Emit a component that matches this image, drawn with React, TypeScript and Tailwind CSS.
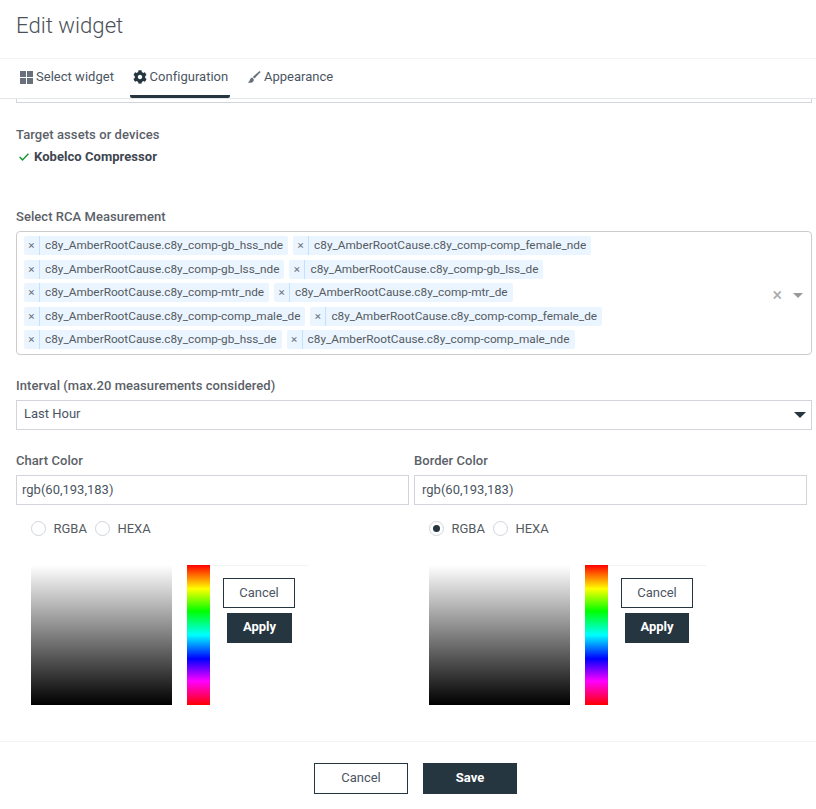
import React from "react";
import { FaCog } from "react-icons/fa";

const rows = [
  ["c8y_AmberRootCause.c8y_comp-gb_hss_nde", "c8y_AmberRootCause.c8y_comp-comp_female_nde"],
  ["c8y_AmberRootCause.c8y_comp-gb_lss_nde", "c8y_AmberRootCause.c8y_comp-gb_lss_de"],
  ["c8y_AmberRootCause.c8y_comp-mtr_nde", "c8y_AmberRootCause.c8y_comp-mtr_de"],
  ["c8y_AmberRootCause.c8y_comp-comp_male_de", "c8y_AmberRootCause.c8y_comp-comp_female_de"],
  ["c8y_AmberRootCause.c8y_comp-gb_hss_de", "c8y_AmberRootCause.c8y_comp-comp_male_nde"],
];

function Chip({ text }: { text: string }) {
  return (
    <div className="flex h-[19px] mr-[5px] rounded-[2px] bg-[#ebf5ff] text-[11.8px] leading-[18px] text-[#555b62]">
      <span className="w-[16px] text-center border-r border-[#c2e0ff] text-[#6b7280]">×</span>
      <span className="pl-[5px] pr-[5px]">{text}</span>
    </div>
  );
}

function Radio({ label, checked }: { label: string; checked?: boolean }) {
  return (
    <div className="flex items-center">
      <span className="flex items-center justify-center w-[15px] h-[15px] rounded-full border border-[#d1d5db] bg-white">
        {checked && <span className="w-[7px] h-[7px] rounded-full bg-[#263640]" />}
      </span>
      <span className="ml-[7.5px] text-[13px] text-[#555b62]">{label}</span>
    </div>
  );
}

function ColorPicker({ applyWidth, checked }: { applyWidth: string; checked?: boolean }) {
  return (
    <div className="pl-[15px]">
      <div className="flex gap-[8px] h-[15px] items-center mt-[16px]">
        <Radio label="RGBA" checked={checked} />
        <Radio label="HEXA" />
      </div>
      <div className="flex mt-[29px]">
        <div className="w-[141px] h-[140px] bg-[linear-gradient(to_bottom,#ffffff,#000000)]" />
        <div className="w-[23px] h-[140px] ml-[15px] bg-[linear-gradient(to_bottom,#ff0000_0%,#ffff00_17%,#00ff00_33%,#00ffff_50%,#0000ff_67%,#ff00ff_83%,#ff0000_100%)]" />
        <div className="w-[98px] border-t border-[#f2f3f4] flex flex-col pl-[13px] pt-[12px]">
          <div className="w-[72px] h-[30px] border border-[#263640] flex items-center justify-center text-[13px] text-[#4b5563]">
            Cancel
          </div>
          <div className={`${applyWidth} h-[30px] mt-[5px] ml-[4px] pb-[2px] bg-[#263640] flex items-center justify-center text-[13px] font-bold text-white`}>
            Apply
          </div>
        </div>
      </div>
    </div>
  );
}

export default function App() {
  return (
    <div className="w-[816px] h-[809px] overflow-hidden bg-white font-[Roboto,sans-serif] text-[#3e4650]">
      <div className="h-[59px] border-b border-[#f2f3f4] pl-[16px] pt-[10px] text-[22.2px] leading-[30px] font-light text-[#4b5158]">
        Edit widget
      </div>
      <div className="h-[40px] border-b border-[#e5e7eb] flex pl-[11px] text-[13px] text-[#4b5563] tracking-[0.02px]">
        <div className="h-[39px] px-[8px] flex items-center border-b-[3px] border-transparent">
          <svg width="13" height="13" viewBox="0 0 13 13" fill="#68717b" className="ml-[1px] mr-[3px]">
            <rect x="0" y="0" width="6" height="6" />
            <rect x="7" y="0" width="6" height="6" />
            <rect x="0" y="7" width="6" height="6" />
            <rect x="7" y="7" width="6" height="6" />
          </svg>
          Select widget
        </div>
        <div className="h-[39px] w-[100px] ml-[8px] pl-[1px] flex items-center justify-center border-b-[3px] border-[#263640] rounded-b-[2px]">
          <FaCog size={14} className="mr-[3px] text-[#263640]" />
          Configuration
        </div>
        <div className="h-[39px] pl-[18px] flex items-center border-b-[3px] border-transparent">
          <svg width="14" height="14" viewBox="0 0 14 14" fill="#68717b" className="mr-[3px] -ml-[1px]">
            <path d="M12.6 1 L5.8 6.9 L7.5 8.6 L13.6 1.9 Z" />
            <path d="M5.2 7.6 C3.4 7.8 3.2 9.6 2.4 10.9 C2 11.5 1.4 11.9 0.8 12.2 C2.6 13.2 5.2 13 6.2 11.6 C6.9 10.6 6.9 9.5 6.6 9 Z" />
          </svg>
          Appearance
        </div>
      </div>
      <div className="pl-[16px] pr-[4px]">
        <div className="h-[4px] border-b border-x border-[#d1d5db]" />
        <div className="mt-[24px] h-[16px] text-[13px] leading-[16px] font-medium tracking-[0.08px] text-[#5b6168]">Target assets or devices</div>
        <div className="mt-[6px] h-[16px] flex items-center text-[13px] font-bold tracking-[0.05px] text-[#3e4650]">
          <svg width="10" height="8" viewBox="0 0 10 8" fill="none" stroke="#1a9638" strokeWidth="1.5" className="ml-[3px] mr-[5px]">
            <path d="M0.6 4 L3.5 6.9 L9.4 0.8" />
          </svg>
          Kobelco Compressor
        </div>
        <div className="mt-[44px] h-[16px] text-[13px] leading-[16px] font-medium tracking-[0.05px] text-[#5b6168]">Select RCA Measurement</div>
        <div className="mt-[6px] h-[124px] border border-[#ccc] rounded-[4px] pl-[7px] pt-[4px] flex items-start">
          <div className="flex-1 flex flex-col gap-[4.5px]">
            {rows.map((r) => (
              <div key={r[0]} className="flex">
                <Chip text={r[0]} />
                <Chip text={r[1]} />
              </div>
            ))}
          </div>
          <div className="self-center flex items-center text-[#aaa] mr-[8px]">
            <span className="text-[18px] leading-[18px] mr-[9px]">×</span>
            <span className="w-0 h-0 border-x-[5px] border-x-transparent border-t-[5px] border-t-[#999] ml-[2px]" />
          </div>
        </div>
        <div className="mt-[23px] h-[16px] text-[13px] leading-[16px] font-medium tracking-[0.05px] text-[#5b6168]">Interval (max.20 measurements considered)</div>
        <div className="mt-[6px] h-[30px] border border-[#d1d5db] flex items-center justify-between pl-[7px] pr-[5px] pb-[2px] text-[13px] text-[#4b5563]">
          Last Hour
          <span className="w-0 h-0 border-x-[6px] border-x-transparent border-t-[6px] border-t-[#263640] mt-[2px]" />
        </div>
        <div className="flex mt-[23px] gap-[5px]">
          <div className="w-[393px]">
            <div className="h-[16px] text-[13px] leading-[16px] font-medium tracking-[0.05px] text-[#5b6168]">Chart Color</div>
            <div className="mt-[6px] h-[30px] border border-[#d1d5db] pl-[5px] flex items-center text-[13px] text-[#4b5563]">rgb(60,193,183)</div>
            <ColorPicker applyWidth="w-[65px]" />
          </div>
          <div className="w-[393px]">
            <div className="h-[16px] text-[13px] leading-[16px] font-medium tracking-[0.05px] text-[#5b6168]">Border Color</div>
            <div className="mt-[6px] h-[30px] border border-[#d1d5db] pl-[7px] flex items-center text-[13px] text-[#4b5563]">rgb(60,193,183)</div>
            <ColorPicker applyWidth="w-[64px]" checked />
          </div>
        </div>
      </div>
      <div className="mt-[36px] border-t border-[#f2f3f4] flex justify-center gap-[15px] pt-[21px] pl-[15px]">
        <div className="w-[94px] h-[31px] pb-[2px] border border-[#263640] flex items-center justify-center text-[13px] text-[#4b5563]">Cancel</div>
        <div className="w-[94px] h-[31px] pb-[2px] bg-[#263640] flex items-center justify-center text-[13px] font-bold text-white">Save</div>
      </div>
    </div>
  );
}
